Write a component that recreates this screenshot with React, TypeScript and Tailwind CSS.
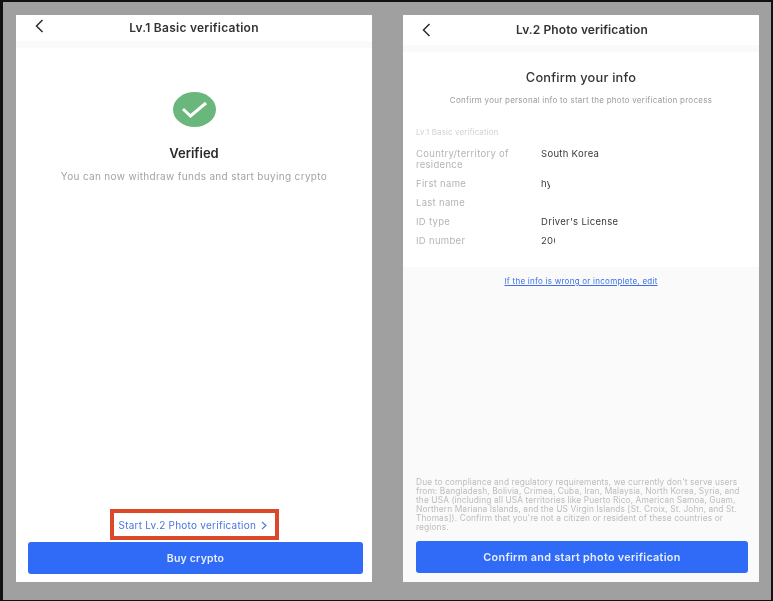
import React from 'react';

const font = { fontFamily: 'Inter, "Liberation Sans", sans-serif' };

// Back chevron in the header
const BackIcon = () => (
  <svg width="9" height="14" viewBox="0 0 9 14" fill="none" stroke="#2b2b2b" strokeWidth="1.5">
    <path d="M7.5 1 L1.5 7 L7.5 13" />
  </svg>
);

const Header = ({ title, tall }: { title: string; tall?: boolean }) => (
  <>
    <div className={`relative flex items-center justify-center bg-white ${tall ? 'h-[30px]' : 'h-[26px]'}`}>
      <span className={`absolute left-[19px] ${tall ? 'top-[8px]' : 'top-[4px]'}`}>
        <BackIcon />
      </span>
      <span className={`text-[12px] font-semibold text-[#333] pb-[1px] ${tall ? 'tracking-[0.1px] pl-[2px]' : 'tracking-[0.25px]'}`}>{title}</span>
    </div>
    <div className="h-[7px] bg-[#fafafa]" />
  </>
);

const InfoRow = ({ label, value, clip }: { label: React.ReactNode; value?: string; clip?: string }) => (
  <div className="flex text-[9.5px] leading-[11px] tracking-[0.3px]">
    <div className="w-[125px] text-[#b5b5b5]">{label}</div>
    {value && (
      <div className={`text-[#3a3a3a] whitespace-nowrap overflow-hidden ${clip ?? ''}`}>{value}</div>
    )}
  </div>
);

export default function App() {
  return (
    <div style={font} className="w-[773px] h-[601px] bg-[#a0a0a0] border-t-2 border-l-[3px] border-r-2 border-b-[1px] border-[#111] pt-[13px] pl-[13px] flex gap-[31px] overflow-hidden blur-[0.4px]">
      {/* Left phone */}
      <div className="w-[356px] h-[567px] bg-white flex flex-col">
        <Header title="Lv.1 Basic verification" />
        <div className="flex flex-col items-center flex-1">
          <svg className="mt-[44px]" width="43" height="35" viewBox="0 0 43 35">
            <ellipse cx="21.5" cy="17.5" rx="21.5" ry="17.5" fill="#69b77a" />
            <path d="M10 17 L17.5 24 L33 11" fill="none" stroke="#fff" strokeWidth="3" />
          </svg>
          <div className="mt-[17px] text-[13px] leading-[18px] font-semibold text-[#2a2a2a]">Verified</div>
          <div className="mt-[7px] text-[10px] leading-[14px] text-[#a3a3a3] tracking-[0.33px]">You can now withdraw funds and start buying crypto</div>
        </div>
        <div className="self-center w-[169px] h-[31px] border-4 border-[#d9492a] flex items-center pl-[5px] pt-[1px] gap-[5px] text-[10px] text-[#4a74e0] tracking-[0.25px] whitespace-nowrap">
          Start Lv.2 Photo verification
          <svg width="6" height="9" viewBox="0 0 6 9" fill="none" stroke="#4a74e0" strokeWidth="1.1">
            <path d="M1 1 L5 4.5 L1 8" />
          </svg>
        </div>
        <div className="ml-[12px] mr-[9px] mt-[2px] mb-[8px] h-[32px] pt-[1px] rounded-[3px] bg-[#2f6bf6] flex items-center justify-center text-[10.5px] font-semibold text-[#e8eefc] tracking-[0.2px]">
          Buy crypto
        </div>
      </div>

      {/* Right phone */}
      <div className="w-[356px] h-[567px] bg-[#fafafa] flex flex-col">
        <Header title="Lv.2 Photo verification" tall />
        <div className="h-[215px] bg-white px-[13px] flex flex-col">
          <div className="mt-[17px] text-center text-[12.8px] leading-[18px] font-medium text-[#333] tracking-[0.2px]">Confirm your info</div>
          <div className="mt-[7px] text-center text-[8px] leading-[12px] text-[#9a9a9a] tracking-[0.26px] whitespace-nowrap">Confirm your personal info to start the photo verification process</div>
          <div className="mt-[20px] text-[8px] leading-[12px] text-[#d2d2d2] tracking-[0.1px]">Lv.1 Basic verification</div>
          <div className="mt-[10px] flex flex-col gap-[8px]">
            <InfoRow label={<>Country/territory of<br />residence</>} value="South Korea" />
            <InfoRow label="First name" value="hy" clip="w-[9px]" />
            <InfoRow label="Last name" />
            <InfoRow label="ID type" value="Driver's License" />
            <InfoRow label="ID number" value="200" clip="w-[14px]" />
          </div>
        </div>
        <div className="mt-[8px] text-center text-[8px] leading-[12px] text-[#3d6fe6] underline tracking-[0.25px]">If the info is wrong or incomplete, edit</div>
        <div className="mt-auto px-[13px] text-[8.4px] leading-[9px] text-[#bdbdbd] tracking-[0.1px]">
          Due to compliance and regulatory requirements, we currently don't serve users<br />
          from: Bangladesh, Bolivia, Crimea, Cuba, Iran, Malaysia, North Korea, Syria, and<br />
          the USA (including all USA territories like Puerto Rico, American Samoa, Guam,<br />
          Northern Mariana Islands, and the US Virgin Islands [St. Croix, St. John, and St.<br />
          Thomas]). Confirm that you're not a citizen or resident of these countries or<br />
          regions.
        </div>
        <div className="ml-[13px] mr-[11px] mt-[9px] mb-[9px] h-[32px] pt-[2px] rounded-[3px] bg-[#2f6bf6] flex items-center justify-center text-[10.8px] font-semibold text-[#e8eefc] tracking-[0.3px]">
          Confirm and start photo verification
        </div>
      </div>
    </div>
  );
}
